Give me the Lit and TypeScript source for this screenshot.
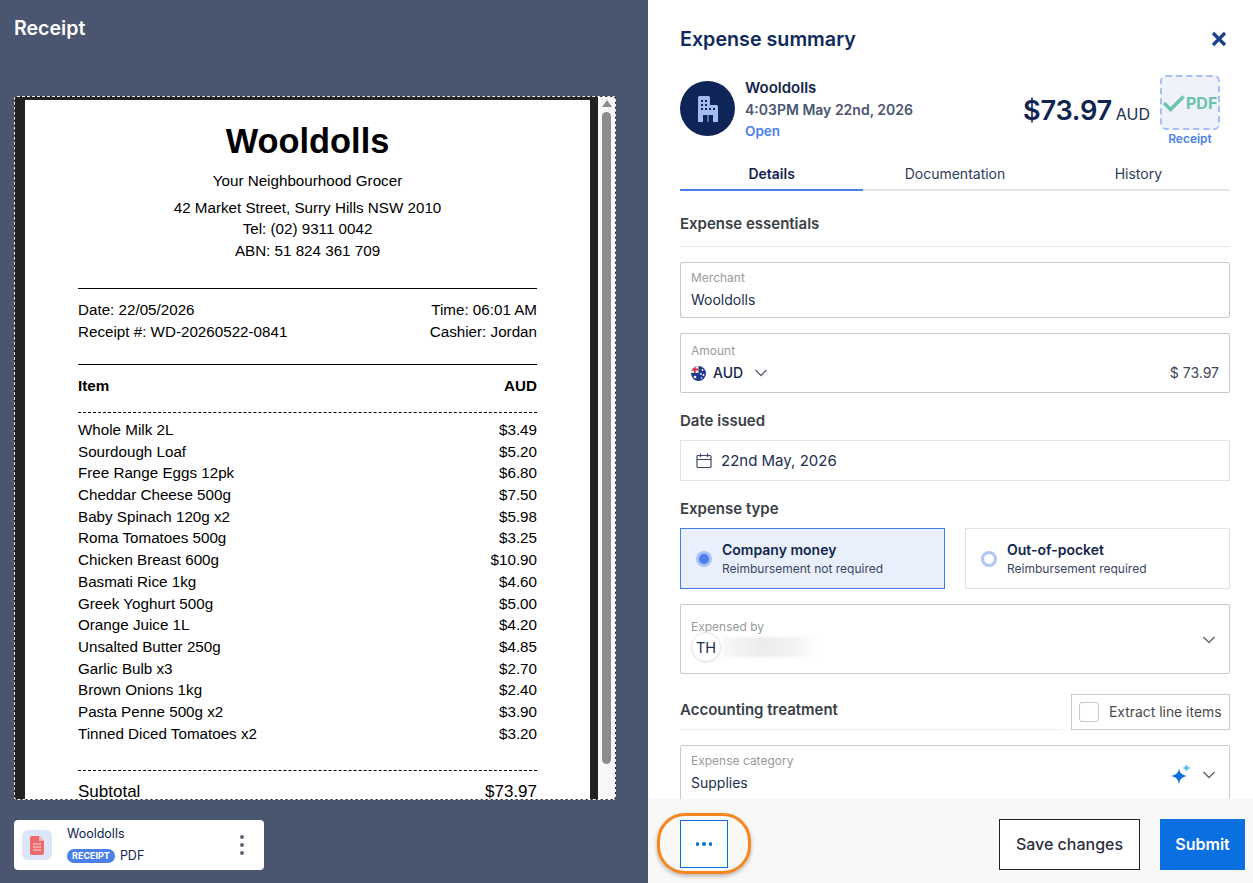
import { LitElement, html, css } from "lit";
import { customElement } from "lit/decorators.js";

const items: [string, string][] = [
  ["Whole Milk 2L", "$3.49"],
  ["Sourdough Loaf", "$5.20"],
  ["Free Range Eggs 12pk", "$6.80"],
  ["Cheddar Cheese 500g", "$7.50"],
  ["Baby Spinach 120g x2", "$5.98"],
  ["Roma Tomatoes 500g", "$3.25"],
  ["Chicken Breast 600g", "$10.90"],
  ["Basmati Rice 1kg", "$4.60"],
  ["Greek Yoghurt 500g", "$5.00"],
  ["Orange Juice 1L", "$4.20"],
  ["Unsalted Butter 250g", "$4.85"],
  ["Garlic Bulb x3", "$2.70"],
  ["Brown Onions 1kg", "$2.40"],
  ["Pasta Penne 500g x2", "$3.90"],
  ["Tinned Diced Tomatoes x2", "$3.20"],
];

const chevron = html`<svg class="chev" width="14" height="8" viewBox="0 0 14 8" fill="none"><path d="M1.500 1l5.500 5.500L12.500 1" stroke="#5f6470" stroke-width="1.400"/></svg>`;

@customElement("app-root")
export class AppRoot extends LitElement {
  static styles = css`
    :host { display: block; width: 1253px; height: 883px; overflow: hidden; font-family: Inter, "Liberation Sans", sans-serif; color: #0f2450; }
    * { box-sizing: border-box; }
    .page { display: flex; height: 883px; }
    .left { width: 648px; flex: none; background: #4a556f; padding: 16px 14px 0; display: flex; flex-direction: column; }
    .left h1 { margin: 0; color: #fff; font-size: 19.6px; line-height: 24px; font-weight: 600; height: 80px; }
    .viewer { width: 602px; height: 704px; border: 1px dashed #f0f0f0; border-radius: 3px; overflow: hidden; display: flex; background: #222; padding: 3px 0 0 10px; }
    .sheet { width: 565px; background: #fff; flex: none; padding: 0 53px; height: 720px; font-family: "Liberation Sans", Arial, sans-serif; color: #000; font-size: 15.2px; line-height: 21.7px; }
    .sheet h2 { margin: 0; padding-top: 19px; height: 70px; font-size: 34.4px; line-height: 44px; font-weight: 700; text-align: center; }
    .center { text-align: center; }
    .tag { margin-bottom: 5px; }
    .addr { margin-bottom: 26px; }
    .rule { border-top: 1px solid #000; }
    .row { display: flex; justify-content: space-between; }
    .meta { padding: 10px 0 22px; }
    .head { padding: 10px 0 15px; font-weight: 700; border-bottom: 1px dashed #000; }
    .list { padding: 6px 0 26px; border-bottom: 1px dashed #000; }
    .sub { padding-top: 10px; font-size: 17px; }
    .track { width: 17px; margin-left: 8px; flex: none; background: #f8f8f8; position: relative; display: flex; flex-direction: column; align-items: center; padding: 3px 0 0; margin-top: -3px; }
    .arrow { width: 0; height: 0; border-left: 5px solid transparent; border-right: 5px solid transparent; border-bottom: 7px solid #8c8c8c; }
    .thumb { width: 9px; margin-top: 5px; height: 652px; border-radius: 5px; background: #8c8c8c; }
    .file { margin-top: 20px; width: 250px; height: 50px; background: #fff; border-radius: 4px; display: flex; align-items: center; padding: 0 8px; }
    .fileicon { width: 30px; height: 30px; border-radius: 6px; background: #dde5f8; display: flex; align-items: center; justify-content: center; flex: none; }
    .fileinfo { margin-left: 15px; flex: 1; font-size: 12.5px; line-height: 16px; color: #0f2450; font-family: Inter, sans-serif; }
    .fileinfo .n { margin-bottom: 6px; margin-top: -1px; }
    .fileline { display: flex; align-items: center; gap: 5px; }
    .badge { background: #4a80ea; color: #fff; font-size: 9px; font-weight: 700; border-radius: 7px; height: 14px; line-height: 14px; padding: 0 5px; }
    .dots { display: flex; flex-direction: column; gap: 4px; margin-right: 12px; }
    .dots i { width: 4px; height: 4px; border-radius: 50%; background: #5e6675; display: block; }

    .right { width: 605px; flex: none; background: #fff; display: flex; flex-direction: column; }
    .scroll { height: 799px; overflow: hidden; padding: 0 23px 0 32px; }
    .title { display: flex; justify-content: space-between; align-items: center; height: 78px; }
    .title h2 { margin: 0; font-size: 19.7px; font-weight: 600; color: #0f2a5c; }
    .title svg { margin-right: 3px; }
    .sum { display: flex; align-items: flex-start; height: 82px; margin-top: -5px; }
    .avatar { width: 55px; height: 55px; border-radius: 50%; background: #0f2557; display: flex; align-items: center; justify-content: center; flex: none; margin-top: 8px; }
    .who { margin: 4px 0 0 10px; flex: 1; }
    .who .a { font-size: 15px; line-height: 22px; font-weight: 600; color: #13254d; }
    .who .b { font-size: 14px; line-height: 22px; font-weight: 600; color: #4a5570; }
    .who .c { font-size: 13.5px; line-height: 20px; font-weight: 600; color: #4a80ea; }
    .amtwrap { display: flex; align-items: baseline; margin: 21px 10px 0 0; }
    .amt { font-size: 27.2px; line-height: 34px; font-weight: 600; color: #0f2450; letter-spacing: -.3px; }
    .aud { font-size: 16px; color: #222f4f; margin-left: 4px; }
    .rcpt { width: 60px; display: flex; flex-direction: column; align-items: center; margin: 2px 10px 0 0; }
    .pdf { width: 60px; height: 55px; background: #eff2f8; border: 2px dashed #a8bdf5; border-radius: 6px; display: flex; align-items: center; color: #6cc3ad; font-weight: 700; font-size: 16px; white-space: nowrap; }
    .rcpt span { font-size: 12px; line-height: 16px; font-weight: 600; color: #4a80ea; margin-top: 1px; }
    .tabs { display: flex; margin-top: 8px; border-bottom: 2px solid #e4e4e4; height: 28px; }
    .tab { flex: 1; text-align: center; font-size: 14px; line-height: 22px; color: #2f3c5c; margin-bottom: -2px; }
    .tab.on { font-weight: 600; color: #13254d; border-bottom: 2px solid #4a80ea; }
    .sec { font-size: 15px; font-weight: 600; color: #3a3f47; line-height: 22px; }
    .essent { margin-top: 22px; padding-bottom: 11px; border-bottom: 1px solid #e6e6e6; }
    .field { border: 1px solid #c9c9c9; border-radius: 2px; padding: 7px 10px 0; position: relative; }
    .lbl { font-size: 12px; line-height: 16px; color: #9a9a9a; }
    .val { font-size: 14px; line-height: 20px; color: #222f4f; }
    .f1 { margin-top: 15px; height: 56px; }
    .f1 .val { margin-top: 4px; }
    .f2 { margin-top: 15px; height: 60px; padding-top: 9px; }
    .amountline { display: flex; align-items: center; margin-top: 4px; font-size: 14px; line-height: 20px; }
    .amountline .cur { margin-left: 7px; font-weight: 500; margin-right: 11px; color: #13254d; }
    .amountline .num { margin-left: auto; color: #3d4656; font-size: 14px; }
    .d1 { margin-top: 17px; }
    .date { margin-top: 8px; height: 41px; border: 1px solid #e3e3e3; display: flex; align-items: center; padding-left: 15px; gap: 9px; font-size: 15px; color: #222f4f; }
    .d2 { margin-top: 17px; }
    .types { margin-top: 8px; display: grid; grid-template-columns: 265px 265px; gap: 20px; }
    .type { height: 61px; border: 1px solid #e3e3e3; display: flex; align-items: center; padding-left: 15px; gap: 10px; }
    .type.on { border-color: #3f7fec; background: #e9f0fc; }
    .radio { width: 16px; height: 16px; border-radius: 50%; flex: none; display: block; }
    .radio.sel { background: #a9c2f5; padding: 3px; }
    .radio.sel i { display: block; width: 10px; height: 10px; border-radius: 50%; background: #4a80ea; }
    .radio.off { border: 3px solid #b3c6f3; background: #fff; }
    .tt { font-size: 14px; line-height: 18px; font-weight: 600; color: #13254d; }
    .ts { font-size: 12px; line-height: 16px; color: #3a4560; margin-top: 2px; }
    .exp { margin-top: 15px; height: 70px; padding-top: 14px; }
    .thline { display: flex; align-items: center; margin-top: -3px; }
    .th { width: 30px; height: 30px; border-radius: 50%; background: #fff; border: 1px solid #e4e6ea; box-shadow: 0 1px 2px rgba(0,0,0,.08); display: flex; align-items: center; justify-content: center; font-size: 14.5px; color: #222f4f; flex: none; }
    .blur { width: 95px; height: 20px; margin-left: 1px; background: linear-gradient(90deg, #f8f8f8 0%, #ececec 40%, #f2f2f2 75%, #fff 100%); filter: blur(1.5px); }
    .chevr { position: absolute; right: 13px; top: 31px; display: flex; align-items: center; gap: 11px; }
    .acct { margin-top: 20px; display: flex; justify-content: space-between; align-items: flex-end; height: 36px; }
    .acct .sec { flex: 1; height: 36px; line-height: 31px; border-bottom: 1px solid #eeeeee; margin-right: 9px; }
    .extract { width: 159px; height: 36px; border: 1px solid #c9c9c9; display: flex; align-items: center; padding-left: 7px; gap: 10px; font-size: 13.9px; color: #4a4a4a; }
    .check { width: 20px; height: 20px; border: 1px solid #c9c9c9; border-radius: 3px; }
    .cat { margin-top: 15px; height: 70px; padding-top: 7px; }
    .cat .val { margin-top: 4px; }
    .chevr.catr { top: 18px; }
    .foot { height: 84px; background: #faf8f6; position: relative; display: flex; align-items: center; padding: 6px 8px 0 32px; }
    .more { width: 48px; height: 48px; border: 1px solid #0a6fe0; background: #fff; display: flex; align-items: center; justify-content: center; gap: 3px; }
    .more i { width: 3.500px; height: 3.500px; border-radius: 50%; background: #0a6fe0; display: block; }
    .ring { position: absolute; left: 9px; top: 14px; width: 94px; height: 61px; border: 3px solid #f5861f; border-radius: 28px; box-shadow: 0 2px 4px rgba(0,0,0,.28); pointer-events: none; }
    .save { margin-left: auto; width: 141px; height: 51px; border: 1px solid #222; background: #fff; font-size: 16px; color: #2a3040; font-weight: 500; display: flex; align-items: center; justify-content: center; }
    .submit { margin-left: 20px; width: 85px; height: 51px; background: #0a6fe0; color: #fff; font-size: 16px; font-weight: 600; display: flex; align-items: center; justify-content: center; }
  `;

  render() {
    return html`<div class="page">
      <section class="left">
        <h1>Receipt</h1>
        <div class="viewer">
          <div class="sheet">
            <h2>Wooldolls</h2>
            <div class="center tag">Your Neighbourhood Grocer</div>
            <div class="center addr">42 Market Street, Surry Hills NSW 2010<br />Tel: (02) 9311 0042<br />ABN: 51 824 361 709</div>
            <div class="rule"></div>
            <div class="meta">
              <div class="row"><span>Date: 22/05/2026</span><span>Time: 06:01 AM</span></div>
              <div class="row"><span>Receipt #: WD-20260522-0841</span><span>Cashier: Jordan</span></div>
            </div>
            <div class="rule"></div>
            <div class="row head"><span>Item</span><span>AUD</span></div>
            <div class="list">
              ${items.map(([n, p]) => html`<div class="row"><span>${n}</span><span>${p}</span></div>`)}
            </div>
            <div class="row sub"><span>Subtotal</span><span>$73.97</span></div>
          </div>
          <div class="track"><div class="arrow"></div><div class="thumb"></div></div>
        </div>
        <div class="file">
          <div class="fileicon">
            <svg width="14" height="19" viewBox="0 0 14 19"><path d="M2 0h7l5 5v12a2 2 0 0 1-2 2H2a2 2 0 0 1-2-2V2a2 2 0 0 1 2-2z" fill="#ec6b6b"/><path d="M9 0l5 5H9z" fill="#f6b5b5"/><path d="M3 8h8M3 11h8M3 14h8" stroke="#fbd6d6" stroke-width="1.200"/></svg>
          </div>
          <div class="fileinfo">
            <div class="n">Wooldolls</div>
            <div class="fileline"><span class="badge">RECEIPT</span><span>PDF</span></div>
          </div>
          <div class="dots"><i></i><i></i><i></i></div>
        </div>
      </section>
      <section class="right">
        <div class="scroll">
          <div class="title">
            <h2>Expense summary</h2>
            <svg width="16" height="16" viewBox="0 0 16 16"><path d="M2 2l12 12M14 2L2 14" stroke="#1c3f8c" stroke-width="3.200"/></svg>
          </div>
          <div class="sum">
            <div class="avatar">
              <svg width="20" height="26" viewBox="0 0 20 26"><path d="M0 1.500A1.500 1.500 0 0 1 1.500 0h9A1.500 1.500 0 0 1 12 1.500V9h6.500A1.500 1.500 0 0 1 20 10.500V26H0z" fill="#a3bcf2"/><g fill="#0f2557"><rect x="3" y="4" width="2" height="2"/><rect x="7" y="4" width="2" height="2"/><rect x="3" y="8" width="2" height="2"/><rect x="7" y="8" width="2" height="2"/><rect x="3" y="12" width="2" height="2"/><rect x="7" y="12" width="2" height="2"/><rect x="11" y="12" width="2" height="2"/><rect x="15" y="12" width="2" height="2"/><rect x="5" y="19" width="10" height="7"/></g><path d="M10 19v7" stroke="#a3bcf2"/></svg>
            </div>
            <div class="who">
              <div class="a">Wooldolls</div>
              <div class="b">4:03PM May 22nd, 2026</div>
              <div class="c">Open</div>
            </div>
            <div class="amtwrap"><span class="amt">$73.97</span><span class="aud">AUD</span></div>
            <div class="rcpt">
              <div class="pdf"><svg width="24" height="18" viewBox="0 0 24 18" fill="none"><path d="M2 9l6.500 6.500L21.500 2.500" stroke="#6cc3ad" stroke-width="3.400"/></svg>PDF</div>
              <span>Receipt</span>
            </div>
          </div>
          <div class="tabs">
            <div class="tab on">Details</div>
            <div class="tab">Documentation</div>
            <div class="tab">History</div>
          </div>
          <div class="sec essent">Expense essentials</div>
          <div class="field f1">
            <div class="lbl">Merchant</div>
            <div class="val">Wooldolls</div>
          </div>
          <div class="field f2">
            <div class="lbl">Amount</div>
            <div class="amountline">
              <svg width="15" height="15" viewBox="0 0 15 15"><clipPath id="fc"><circle cx="7.500" cy="7.500" r="7.500"/></clipPath><g clip-path="url(#fc)"><rect width="15" height="15" fill="#1f3a8f"/><rect x="0" y="0" width="7.500" height="7" fill="#f3f3f7"/><path d="M3.700 0v7M0 3.500h7.500" stroke="#d8283c" stroke-width="1.800"/><circle cx="11.500" cy="4" r=".9" fill="#fff"/><circle cx="10" cy="8" r=".9" fill="#fff"/><circle cx="12.500" cy="9" r=".9" fill="#fff"/><circle cx="4" cy="11" r="1.300" fill="#fff"/><circle cx="10.500" cy="12" r=".8" fill="#fff"/></g></svg>
              <span class="cur">AUD</span>${chevron}
              <span class="num">$ 73.97</span>
            </div>
          </div>
          <div class="sec d1">Date issued</div>
          <div class="date">
            <svg width="16" height="16" viewBox="0 0 16 16" fill="none" stroke="#3f4a66" stroke-width="1.200"><rect x="1" y="2.500" width="14" height="12" rx="1"/><path d="M1 6.500h14M4.500 .5v3.500M11.500 .5v3.500"/></svg>
            22nd May, 2026
          </div>
          <div class="sec d2">Expense type</div>
          <div class="types">
            <div class="type on"><span class="radio sel"><i></i></span><div><div class="tt">Company money</div><div class="ts">Reimbursement not required</div></div></div>
            <div class="type"><span class="radio off"></span><div><div class="tt">Out-of-pocket</div><div class="ts">Reimbursement required</div></div></div>
          </div>
          <div class="field exp">
            <div class="lbl">Expensed by</div>
            <div class="thline"><div class="th">TH</div><div class="blur"></div></div>
            <div class="chevr">${chevron}</div>
          </div>
          <div class="acct">
            <div class="sec">Accounting treatment</div>
            <div class="extract"><div class="check"></div>Extract line items</div>
          </div>
          <div class="field cat">
            <div class="lbl">Expense category</div>
            <div class="val">Supplies</div>
            <div class="chevr catr">
              <svg width="20" height="21" viewBox="0 0 20 21"><path d="M8 4.500c.8 4.500 2.700 6.400 8 7.500-5.300 1.100-7.200 3.200-8 8.500-.8-5.300-2.700-7.400-8-8.500 5.300-1.100 7.200-3 8-7.500z" fill="#0a6fe0"/><path d="M15.500 0c.3 2.200 1.300 3.200 4 4-2.700.8-3.700 1.800-4 4-.3-2.200-1.300-3.200-4-4 2.700-.8 3.700-1.800 4-4z" fill="#4cc0f0"/></svg>
              ${chevron}
            </div>
          </div>
        </div>
        <div class="foot">
          <div class="more"><i></i><i></i><i></i></div>
          <div class="ring"></div>
          <div class="save">Save changes</div>
          <div class="submit">Submit</div>
        </div>
      </section>
    </div>`;
  }
}
